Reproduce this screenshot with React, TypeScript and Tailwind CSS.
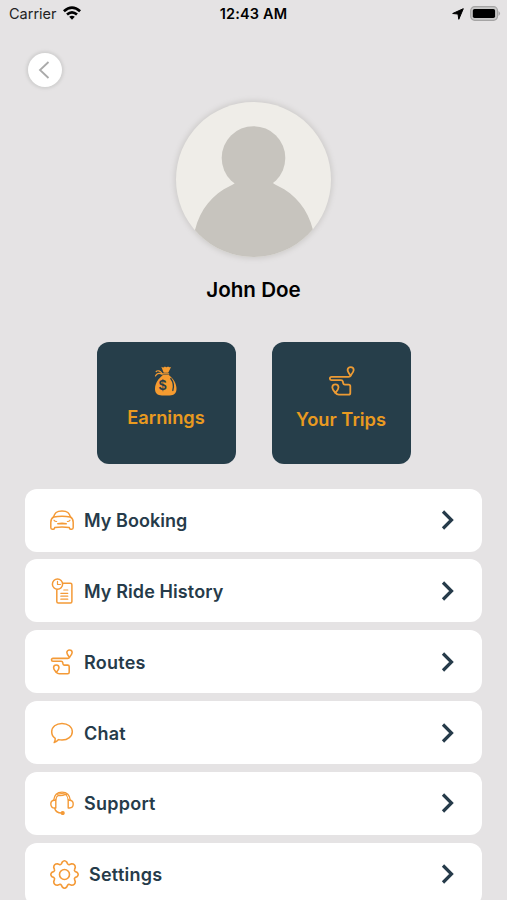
import type { ReactNode } from 'react';
import { clsx } from 'clsx';

interface MenuItem {
  label: string;
  icon: ReactNode;
  textClass: string;
}

function RouteIcon({ className }: { className?: string }) {
  return (
    <svg viewBox="0 0 26 30" fill="none" stroke="currentColor" strokeWidth="1.8" strokeLinejoin="round" strokeLinecap="round" className={className}>
      <path d="M21.6 9.6C19.6 7 18.6 5.800 18.600 4.100a3 3 0 0 1 6.100 0c0 1.700-1.100 2.900-3.100 5.500Z" />
      <path d="M21.600 9.600c-.3.900-1 1.200-2 1.200H2.500a1.600 1.600 0 0 0 0 3.300h9.500c1.300 0 1.700.6 1.900 1.600l.3 1.600c.2.900.7 1.300 1.600 1.300h3.800c1.200 0 1.700.6 1.700 1.700v6.600c0 1.100-.6 1.700-1.700 1.700h-9.800c-1.500 0-2.500-.6-3.400-1.700" />
      <path d="M6.400 26.900C4.500 24.500 3.300 23.200 3.300 21.500a3.100 3.100 0 0 1 6.200 0c0 1.700-1.200 3-3.100 5.400Z" />
    </svg>
  );
}

function MoneyBagIcon() {
  return (
    <svg viewBox="0 0 24 30" className="h-[30px] w-6" fill="none">
      <path d="M7.3.8c1.6 1 2.4.8 3.6-.2 1.1.8 2.1.8 3.1 0 1.1 1 2.2.9 3.2.1l-3 6H9.7L7.3.8Z" fill="#f59b30" />
      <path d="M8.9 9h6c4.400 3.500 7.600 8.700 7.600 13.800 0 4.500-2.500 6.600-6.800 6.600H8c-4.700 0-7-2.200-7-6.600C1 17.600 4.300 12.500 8.900 9Z" fill="#f59b30" />
      <path d="M9 7.900h5.700M8.200 7.600C6 4.800 3.600 4 2.200 5.500M8 8.300C4.900 6.500 2.400 7.900 1.500 10" stroke="#f59b30" strokeWidth="1.2" strokeLinecap="round" />
      <path d="M16.800 12.500c2.600 3.500 3.200 8 2 12" stroke="#263e4a" strokeWidth="1.3" strokeLinecap="round" />
      <text x="8.700" y="24" textAnchor="middle" fontFamily="Liberation Sans, sans-serif" fontSize="14" fontWeight="700" fill="#263e4a">$</text>
    </svg>
  );
}

function CarIcon() {
  return (
    <svg viewBox="0 0 24 20" className="h-5 w-6" fill="none" stroke="currentColor" strokeWidth="1.5" strokeLinejoin="round" strokeLinecap="round">
      <path d="M3.400 7.300C4.800 3 6.400.9 12 .9s7.200 2.100 8.600 6.400" />
      <path d="M3.600 7Q.8 8.500.8 12.500V17.500q0 1.700 1.400 1.700h1q1 0 1.300-1l.2-.6Q12 16.300 19.300 17.600l.2.600q.3 1 1.300 1h1q1.400 0 1.400-1.700v-5q0-4-2.800-5.500Q12 5.300 3.600 7Z" />
      <path d="M4 10.200q.8 1.300 2.600 1.300M20 10.200q-.8 1.300-2.600 1.300" strokeWidth="1.200" />
      <path d="M7.800 13.700q4.200-1.100 8.400 0Z" />
    </svg>
  );
}

function HistoryIcon() {
  return (
    <svg viewBox="0 0 24 26" className="h-[26px] w-6" fill="none" stroke="currentColor" strokeWidth="1.5" strokeLinejoin="round" strokeLinecap="round">
      <path d="M13 5.200h7.400q1.500 0 1.500 1.500v16.800q0 1.500-1.500 1.500H8.300q-1.500 0-1.500-1.500V12" />
      <circle cx="7.500" cy="6.200" r="5.100" />
      <path d="M7.500 3.300v3.200h2.900M13.800 12h4M10.800 15.300h7M10.800 18.200h7M10.800 21.200h7" strokeWidth="1.200" />
    </svg>
  );
}

function ChatIcon() {
  return (
    <svg viewBox="0 0 24 22" className="h-[22px] w-6" fill="none" stroke="currentColor" strokeWidth="1.500" strokeLinejoin="round">
      <path d="M12 1.400c5.900 0 10.300 3.600 10.300 8.300S17.900 18 12 18c-1.200 0-2.300-.1-3.400-.4-1.300 1.500-2.500 2.500-4.400 3 .8-1.500 1.200-2.800 1-4.300C2.900 14.800 1.700 12.400 1.700 9.700 1.700 5 6.100 1.400 12 1.400Z" />
    </svg>
  );
}

function HeadsetIcon() {
  return (
    <svg viewBox="0 0 24 24" className="size-6" fill="none" stroke="currentColor" strokeWidth="1.400" strokeLinejoin="round" strokeLinecap="round">
      <path d="M3.700 9.300C4.200 4.300 7.300 1.100 12 1.100s7.800 3.200 8.300 8.200" />
      <path d="M5.800 8.800V17H4.500C2.200 17 .8 15.400.8 13.100S2.200 9.300 4.500 9.300h1.300M18.200 8.800V17h1.300c2.300 0 3.700-1.600 3.700-3.900s-1.400-3.800-3.700-3.800h-1.300M4.500 17c.9 3.200 3.600 5 7 5" />
      <path d="M5.800 8.800C6.200 6.400 7 5 8.300 4.500 10.800 5 14 4.200 15.500 3.400c1.500 1.200 2.400 3 2.700 5.400" strokeWidth="1.200" />
      <path d="M7.300 3.300q4.700-1.600 9.200.2" strokeWidth="1.200" />
      <circle cx="12.700" cy="22" r="1.400" fill="currentColor" />
    </svg>
  );
}

function GearIcon() {
  return (
    <svg viewBox="0 0 29 29" className="size-[29px]" fill="none" stroke="currentColor" strokeWidth="1.600" strokeLinejoin="round">
      <path d="M12.200 2.100Q14.500-.5 16.800 2.100L17.600 3.900Q18.400 5 19.700 4.400L21.600 3.700Q25.200 3.800 25.300 7.400L24.600 9.300Q24 10.600 25.100 11.400L26.900 12.200Q29.500 14.500 26.900 16.800L25.100 17.600Q24 18.400 24.600 19.700L25.300 21.600Q25.200 25.200 21.600 25.300L19.700 24.600Q18.400 24 17.600 25.100L16.800 26.900Q14.500 29.500 12.200 26.900L11.400 25.100Q10.600 24 9.300 24.600L7.400 25.300Q3.800 25.200 3.700 21.600L4.400 19.700Q5 18.400 3.900 17.600L2.100 16.800Q-.5 14.500 2.100 12.200L3.900 11.400Q5 10.600 4.400 9.300L3.700 7.400Q3.800 3.800 7.400 3.700L9.300 4.400Q10.600 5 11.400 3.900Z" />
      <circle cx="14.500" cy="14.500" r="5" />
    </svg>
  );
}

const menuItems: MenuItem[] = [
  { label: 'My Booking', icon: <CarIcon />, textClass: 'tracking-[0.05px]' },
  { label: 'My Ride History', icon: <HistoryIcon />, textClass: 'tracking-[0.1px]' },
  { label: 'Routes', icon: <RouteIcon className="h-[26px] w-6" />, textClass: 'tracking-[0.25px]' },
  { label: 'Chat', icon: <ChatIcon />, textClass: 'tracking-[0.25px]' },
  { label: 'Support', icon: <HeadsetIcon />, textClass: 'tracking-[0.25px]' },
  { label: 'Settings', icon: <GearIcon />, textClass: 'tracking-[0.25px]' },
];

function StatusBar() {
  return (
    <div className="grid h-7 grid-cols-3 items-center pl-[9px] pr-[6px] text-black">
      <div className="flex items-center gap-[6px] text-[14.500px] text-[#222]">
        Carrier
        <svg viewBox="0 0 18 14" className="mb-[2px] h-[14px] w-[18px]" fill="none" stroke="#000" strokeWidth="2.700">
          <path d="M.9 5.200Q9-2.100 17.100 5.200M4 8.500Q9 4.200 14 8.500" />
          <path d="M6.200 10.800Q9 8.500 11.800 10.800L9 13.700Z" fill="#000" stroke="none" />
        </svg>
      </div>
      <div className="-ml-[3px] text-center text-[14.500px] font-semibold tracking-[0.15px] whitespace-nowrap">12:43 AM</div>
      <div className="flex items-center justify-end gap-[6px] pb-[2px]">
        <svg viewBox="0 0 12 12" className="mt-[2px] size-3">
          <path d="M11.300.7 6.800 11.300 6 6 .7 5.500Z" fill="#000" stroke="#000" strokeWidth="1" strokeLinejoin="round" />
        </svg>
        <svg viewBox="0 0 31 15" className="h-[15px] w-[31px]">
          <rect x=".7" y=".7" width="26.800" height="13.600" rx="4" fill="#c9c8c8" stroke="#a5a4a4" strokeWidth="1.200" />
          <rect x="2.800" y="3" width="22.300" height="9" rx="1.700" fill="#000" />
          <path d="M28.500 5.100q3.100 2.400 0 4.800Z" fill="#a5a4a4" />
        </svg>
      </div>
    </div>
  );
}

export default function App() {
  return (
    <div className="h-[900px] w-[507px] overflow-hidden bg-[#e5e3e4] font-['Inter',sans-serif]">
      <StatusBar />

      <div className="h-[74px] pl-7 pt-[25px]">
        <button className="flex size-[34px] items-center justify-center rounded-full bg-white shadow-[0_0_3px_2px_#d1d0d0]" aria-label="Back">
          <svg viewBox="0 0 12 18" className="mr-[3px] h-[18px] w-3" fill="none" stroke="#aaa" strokeWidth="1.800">
            <path d="m10.500 1-8.500 8 8.500 8" />
          </svg>
        </button>
      </div>

      <div className="flex flex-col items-center">
        <div className="size-[155px] overflow-hidden rounded-full bg-[#efede8] shadow-[0_0_5px_2px_#d0cecd]">
          <svg viewBox="0 0 155 155" className="size-full" fill="#c7c4be">
            <circle cx="77.500" cy="56" r="31.800" />
            <path d="M59 81c-1 1-3 2-5 3-17 8-30 23-35 44v27h118v-27c-5-21-18-36-35-44-2-1-4-2-5-3Z" />
          </svg>
        </div>
        <h1 className="mt-[17px] h-[30px] text-[20.600px] leading-[31px] font-semibold text-black">John Doe</h1>
      </div>

      <div className="mt-[38px] flex justify-center gap-9">
        <button className="flex h-[122px] w-[139px] flex-col items-center rounded-xl bg-[#263e4a] pt-6">
          <MoneyBagIcon />
          <span className="mt-[7px] text-[18.300px] leading-7 font-semibold text-[#e99a20]">Earnings</span>
        </button>
        <button className="flex h-[122px] w-[139px] flex-col items-center rounded-xl bg-[#263e4a] pt-6 text-[#ed9b34]">
          <RouteIcon className="ml-[2px] h-[30px] w-[26px]" />
          <span className="mt-[9px] text-[18.300px] leading-7 font-semibold text-[#e99a20]">Your Trips</span>
        </button>
      </div>

      <div className="mt-[24.600px] flex flex-col gap-[7.850px] px-[25px]">
        {menuItems.map((item) => (
          <button key={item.label} className="flex h-[63px] w-full shrink-0 items-center rounded-xl bg-white pl-[25px] pr-7 text-left text-[#f49a37]">
            {item.icon}
            <span className={clsx('ml-[10px] flex-1 pt-px text-[18px] font-semibold text-[#263b4a]', item.textClass)}>{item.label}</span>
            <svg viewBox="0 0 13 20" className="h-5 w-[13px]" fill="none" stroke="#263b4a" strokeWidth="3.200">
              <path d="m2 1.500 8.500 8.500L2 18.500" />
            </svg>
          </button>
        ))}
      </div>
    </div>
  );
}
